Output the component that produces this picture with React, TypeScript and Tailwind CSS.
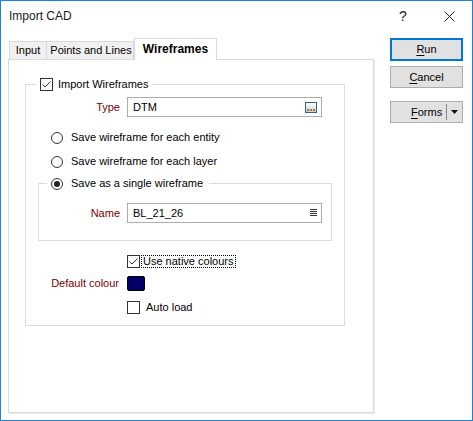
import React from "react";

const LABEL = "text-[#800000]";

function Check({ checked }: { checked?: boolean }) {
  return (
    <span className="flex h-[13px] w-[13px] shrink-0 items-center justify-center border border-[#333333] bg-white">
      {checked && (
        <svg width="11" height="11" viewBox="0 0 11 11">
          <path d="M1.5 5.5 L4 8 L9.5 2.5" fill="none" stroke="#333333" strokeWidth="1" />
        </svg>
      )}
    </span>
  );
}

function Radio({ checked }: { checked?: boolean }) {
  return (
    <span className="flex h-[12px] w-[12px] shrink-0 items-center justify-center rounded-full border border-[#333333] bg-white">
      {checked && <span className="h-[6px] w-[6px] rounded-full bg-[#222222]" />}
    </span>
  );
}

function EllipsisIcon() {
  return (
    <svg width="12" height="11" viewBox="0 0 12 11">
      <defs>
        <linearGradient id="eg" x1="0" y1="0" x2="0" y2="1">
          <stop offset="0" stopColor="#ffffff" />
          <stop offset="1" stopColor="#b9cfe8" />
        </linearGradient>
      </defs>
      <rect x="0.5" y="0.5" width="11" height="10" fill="url(#eg)" stroke="#3d5f86" />
      <rect x="2" y="7" width="2" height="2" fill="#c07a22" />
      <rect x="5" y="7" width="2" height="2" fill="#c07a22" />
      <rect x="8" y="7" width="2" height="2" fill="#c07a22" />
    </svg>
  );
}

function ListIcon() {
  return (
    <svg width="7" height="8" viewBox="0 0 7 8">
      <path d="M0 0.5H7M0 2.5H7M0 4.5H7M0 6.5H7" stroke="#333333" strokeWidth="1" />
    </svg>
  );
}

function Field({ value, icon }: { value: string; icon: React.ReactNode }) {
  return (
    <div className="ml-[7px] flex h-[20px] w-[195px] items-center justify-between border border-[#adadad] bg-white pl-[5px] pr-[4px]">
      <span>{value}</span>
      {icon}
    </div>
  );
}

function Button({ first, rest, primary }: { first: string; rest: string; primary?: boolean }) {
  return (
    <button
      type="button"
      className={`flex w-[73px] items-center justify-center bg-[#e1e1e1] text-[11px] text-black ${
        primary ? "h-[23px] border-2 border-[#0078d7]" : "h-[22px] border border-[#adadad]"
      }`}
    >
      <span>
        <span className="underline underline-offset-[2px]">{first}</span>
        {rest}
      </span>
    </button>
  );
}

export default function App() {
  return (
    <div className="flex h-[421px] w-[473px] flex-col border border-[#1883d7] bg-white font-['Liberation_Sans',Arial,sans-serif] text-[11px] leading-[13px] text-black">
      {/* title bar */}
      <div className="flex h-[31px] shrink-0 items-center">
        <span className="pl-[8px] text-[12px] text-[#1a1a1a]">Import CAD</span>
        <span className="ml-auto flex w-[46px] justify-center text-[14px] text-[#222222]">?</span>
        <span className="flex w-[46px] justify-center">
          <svg width="11" height="11" viewBox="0 0 11 11">
            <path d="M0.5 0.5L10.5 10.5M10.5 0.5L0.5 10.5" stroke="#222222" strokeWidth="1" />
          </svg>
        </span>
      </div>

      <div className="flex">
        {/* left: tabs + panel */}
        <div className="ml-[7px] mt-[6px] flex flex-col">
          <div className="flex h-[21px] items-end pl-[1px]">
            <div className="flex h-[18px] w-[38px] items-center justify-center border border-b-0 border-[#d9d9d9] bg-[#f0f0f0]">
              Input
            </div>
            <div className="flex h-[18px] w-[87px] items-center justify-center border border-b-0 border-l-0 border-[#d9d9d9] bg-[#f0f0f0] pl-[2px]">
              Points and Lines
            </div>
            <div className="relative z-10 -mb-[1px] flex h-[22px] w-[83px] items-center justify-center border border-b-0 border-[#d9d9d9] bg-white text-[12px] font-bold">
              Wireframes
            </div>
          </div>

          <div className="h-[354px] w-[366px] border border-[#d9d9d9] bg-white shadow-[1px_1px_0_0_#ececec]">
            <fieldset className="ml-[16px] mt-[18px] w-[320px] border border-[#dcdcdc] pb-[11px]">
              <legend className="ml-[10px] pl-[4px] pr-[4px]">
                <div className="flex h-[13px] items-center">
                  <Check checked />
                  <span className="ml-[5px]">Import Wireframes</span>
                </div>
              </legend>

              <div className="mt-[6px] flex items-center">
                <span className={`w-[94px] text-right ${LABEL}`}>Type</span>
                <Field value="DTM" icon={<EllipsisIcon />} />
              </div>

              <div className="ml-[25px] mt-[14px] flex h-[13px] items-center">
                <Radio />
                <span className="ml-[8px]">Save wireframe for each entity</span>
              </div>
              <div className="ml-[25px] mt-[11px] flex h-[13px] items-center">
                <Radio />
                <span className="ml-[8px]">Save wireframe for each layer</span>
              </div>

              <fieldset className="ml-[12px] mt-[9px] w-[294px] border border-[#dcdcdc] pb-[17px]">
                <legend className="ml-[8px] pl-[4px] pr-[6px]">
                  <div className="flex h-[13px] items-center">
                    <Radio checked />
                    <span className="ml-[8px]">Save as a single wireframe</span>
                  </div>
                </legend>
                <div className="mt-[13px] flex items-center">
                  <span className={`w-[81px] text-right ${LABEL}`}>Name</span>
                  <Field value="BL_21_26" icon={<ListIcon />} />
                </div>
              </fieldset>

              <div className="ml-[101px] mt-[14px] flex h-[13px] items-center">
                <Check checked />
                <span className="ml-[2px] px-[1px] leading-[11px] outline-1 outline-dotted outline-black">
                  Use native colours
                </span>
              </div>

              <div className="mt-[8px] flex items-center">
                <span className={`w-[93px] text-right ${LABEL}`}>Default colour</span>
                <span className="ml-[8px] h-[15px] w-[18px] rounded-[2px] border border-black bg-[#000066]" />
              </div>

              <div className="ml-[101px] mt-[10px] flex h-[13px] items-center">
                <Check />
                <span className="ml-[6px]">Auto load</span>
              </div>
            </fieldset>
          </div>
        </div>

        {/* right: buttons */}
        <div className="ml-[16px] mt-[6px] flex flex-col">
          <Button first="R" rest="un" primary />
          <div className="mt-[5px]">
            <Button first="C" rest="ancel" />
          </div>
          <div className="mt-[13px] flex h-[22px] w-[73px] items-center border border-[#adadad] bg-[#e1e1e1]">
            <span className="ml-[20px]">
              <span className="underline underline-offset-[2px]">F</span>orms
            </span>
            <span className="ml-auto h-[16px] w-[1px] bg-[#8a8a8a]" />
            <span className="flex w-[15px] justify-center">
              <svg width="7" height="4" viewBox="0 0 7 4">
                <path d="M0 0H7L3.5 4Z" fill="#111111" />
              </svg>
            </span>
          </div>
        </div>
      </div>
    </div>
  );
}
